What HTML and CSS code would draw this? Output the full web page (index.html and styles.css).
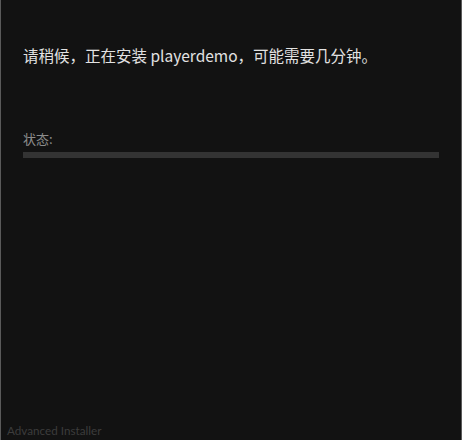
FILE: index.html
```html
<!DOCTYPE html>
<html lang="zh-CN">
<head>
<meta charset="utf-8">
<link rel="stylesheet" href="styles.css">
</head>
<body>
<div class="window">
  <div class="content">
    <p class="message">请稍候，正在安装 playerdemo，可能需要几分钟。</p>
    <div class="status">
      <div class="status-label">状态:</div>
      <div class="progress"></div>
    </div>
  </div>
  <div class="footer">Advanced Installer</div>
</div>
</body>
</html>
```
FILE: styles.css
```css
html, body {
  margin: 0;
  padding: 0;
  background: #121212;
}
.window {
  width: 462px;
  height: 440px;
  box-sizing: border-box;
  border-left: 1px solid #5a5a5a;
  border-right: 1px solid #5a5a5a;
  background: #121212;
  display: flex;
  flex-direction: column;
  font-family: "Noto Sans CJK SC", "Open Sans", sans-serif;
}
.content {
  flex: 1;
  padding: 44px 22px 0 22px;
}
.message {
  margin: 0;
  font-size: 15.5px;
  line-height: 22px;
  color: #e2e2e2;
}
.status {
  margin-top: 64px;
}
.status-label {
  font-size: 13px;
  line-height: 17px;
  color: #8c8c8c;
}
.progress {
  margin-top: 5px;
  height: 6px;
  background: #333333;
}
.footer {
  padding: 0 0 2px 6px;
  font-family: "Lato", "Noto Sans", sans-serif;
  font-size: 11.7px;
  line-height: 16px;
  color: #3c3c3c;
}
```
